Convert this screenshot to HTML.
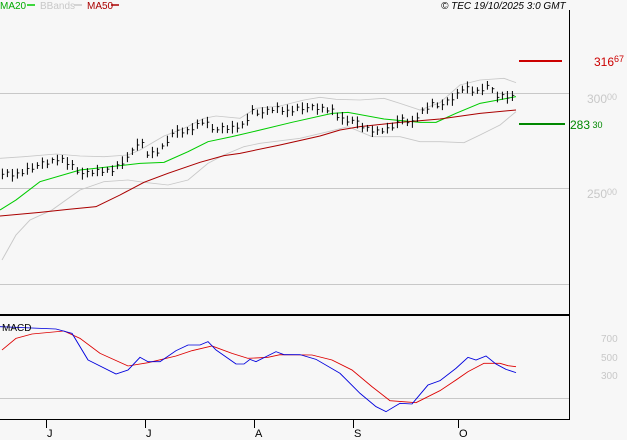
<!DOCTYPE html>
<html><head><meta charset="utf-8"><style>
body{margin:0;background:#f7f7f7;width:627px;height:440px;overflow:hidden;font-family:"Liberation Sans",sans-serif;}
svg{display:block}
text{font-family:"Liberation Sans",sans-serif}
</style></head><body>
<svg width="627" height="440" xmlns="http://www.w3.org/2000/svg">
<rect width="627" height="440" fill="#f7f7f7"/>
<g stroke="#c8c8c8" stroke-width="1">
<line x1="0" y1="93.5" x2="569" y2="93.5"/>
<line x1="0" y1="188.5" x2="569" y2="188.5"/>
<line x1="0" y1="284.5" x2="569" y2="284.5"/>
<line x1="0" y1="398.5" x2="569" y2="398.5"/>
</g>
<line x1="569.5" y1="10" x2="569.5" y2="419" stroke="#000"/>
<line x1="0" y1="315" x2="569" y2="315" stroke="#000" stroke-width="2"/>
<line x1="0" y1="419.5" x2="570" y2="419.5" stroke="#000"/>
<g stroke="#000"><line x1="46.5" y1="419" x2="46.5" y2="428"/><line x1="145.5" y1="419" x2="145.5" y2="428"/><line x1="254.5" y1="419" x2="254.5" y2="428"/><line x1="353.5" y1="419" x2="353.5" y2="428"/><line x1="458.5" y1="419" x2="458.5" y2="428"/></g>
<g font-size="11" fill="#000"><text x="47" y="437">J</text><text x="146" y="437">J</text><text x="255" y="437">A</text><text x="354" y="437">S</text><text x="459" y="437">O</text></g>
<g fill="none" transform="scale(0.4,0.33333)">
<polyline stroke="#c8c8c8" stroke-width="2.5" points="0,475 60,470 140,462 200,468 260,470 320,465 350,450 410,408 460,385 510,355 540,348 600,355 640,325 700,318 760,300 800,292 840,298 900,300 960,295 1000,310 1050,330 1100,308 1150,255 1200,240 1260,235 1290,248"/>
<polyline stroke="#c8c8c8" stroke-width="2.5" points="5,780 40,705 75,660 130,630 200,570 260,545 320,540 360,547 420,555 470,540 520,490 560,465 610,440 650,430 750,415 820,395 870,380 930,410 1000,410 1050,425 1100,425 1160,428 1200,405 1250,375 1290,335"/>
<polyline stroke="#00cc00" stroke-width="3" points="0,630 40,600 100,545 200,510 300,497 350,490 410,487 470,455 520,425 580,410 640,393 730,367 830,340 870,337 960,357 1050,367 1090,367 1140,340 1200,310 1290,290"/>
<polyline stroke="#aa0000" stroke-width="3" points="0,648 100,637 170,628 240,620 300,585 360,547 420,520 500,487 560,467 600,460 700,435 800,408 850,390 900,380 1000,367 1100,357 1200,340 1290,330"/>
<g id="bars" stroke="#000" stroke-width="2.5"></g>
</g>
<g fill="none" transform="translate(0,220) scale(0.4,0.33333)" stroke-width="2.5">
<polyline stroke="#dd0000" points="5,390 40,355 80,342 160,333 200,355 250,400 320,438 370,428 440,408 480,392 530,378 580,400 620,415 670,412 700,404 780,405 830,420 880,450 930,500 975,542 1040,548 1100,512 1140,480 1170,455 1210,430 1250,430 1270,437 1290,440"/>
<polyline stroke="#0000dd" points="0,320 140,327 180,340 220,420 290,462 320,450 350,412 370,425 400,425 440,392 470,375 500,375 520,365 540,390 590,432 610,432 625,418 640,425 690,395 710,404 750,404 790,418 850,460 900,520 940,560 965,575 1000,550 1030,552 1070,495 1100,482 1140,445 1170,412 1190,420 1215,408 1240,432 1265,448 1290,458"/>
</g>
<line x1="519" y1="61" x2="562" y2="61" stroke="#cc0000" stroke-width="2"/>
<line x1="519" y1="124" x2="565" y2="124" stroke="#008800" stroke-width="2"/>
<text x="594" y="66" font-size="12" fill="#cc0000">316<tspan font-size="9" dy="-4">67</tspan></text>
<text x="570" y="129" font-size="12" fill="#008800">283<tspan font-size="9" dy="-1"> 30</tspan></text>
<text x="587" y="103" font-size="12" fill="#c8c8c8">300<tspan font-size="9" dy="-3">00</tspan></text>
<text x="587" y="198" font-size="12" fill="#c8c8c8">250<tspan font-size="9" dy="-3">00</tspan></text>
<g font-size="10" fill="#c8c8c8"><text x="601" y="342">700</text><text x="601" y="361">500</text><text x="601" y="379">300</text></g>
<text x="0" y="9" font-size="10" fill="#00aa00">MA20</text><line x1="27" y1="5" x2="35" y2="5" stroke="#00cc00" stroke-width="1.5"/>
<text x="40" y="9" font-size="10" fill="#c8c8c8">BBands</text><line x1="74" y1="5" x2="82" y2="5" stroke="#c8c8c8" stroke-width="1.5"/>
<text x="87" y="9" font-size="10" fill="#aa0000">MA50</text><line x1="111" y1="5" x2="119" y2="5" stroke="#aa0000" stroke-width="1.5"/>
<text x="441" y="9" font-size="10" font-style="italic" fill="#000">© TEC 19/10/2025 3:0 GMT</text>
<text x="2" y="331" font-size="10" fill="#000">MACD</text>
</svg>
<script>
var p=[[0,520],[40,525],[80,500],[120,490],[150,475],[180,495],[210,525],[240,515],[280,510],[300,490],[330,460],[350,420],[370,465],[400,450],[430,400],[470,395],[510,360],[540,390],[580,385],[610,375],[630,330],[660,340],[690,325],[720,335],[750,320],[780,325],[830,330],[850,355],[880,360],[910,385],[940,395],[970,385],[1000,360],[1030,370],[1050,340],[1080,310],[1110,315],[1140,290],[1160,260],[1190,275],[1220,255],[1240,290],[1270,290],[1290,290]];
function y(x){for(var i=1;i<p.length;i++){if(x<=p[i][0]){var a=p[i-1],b=p[i];return a[1]+(b[1]-a[1])*(x-a[0])/(b[0]-a[0]);}}return 290;}
var g=document.getElementById('bars'),s='',k=0;
for(var x=6;x<=1290;x+=12.5){k++;var c=y(x),h=9+(k*7%11),o=((k*5)%9)-4;
s+='<line x1="'+x+'" y1="'+(c-h+o)+'" x2="'+x+'" y2="'+(c+h+o)+'"/><line x1="'+x+'" y1="'+(c+o*2)+'" x2="'+(x+5)+'" y2="'+(c+o*2)+'"/>';}
g.innerHTML=s;
</script>
</body></html>
